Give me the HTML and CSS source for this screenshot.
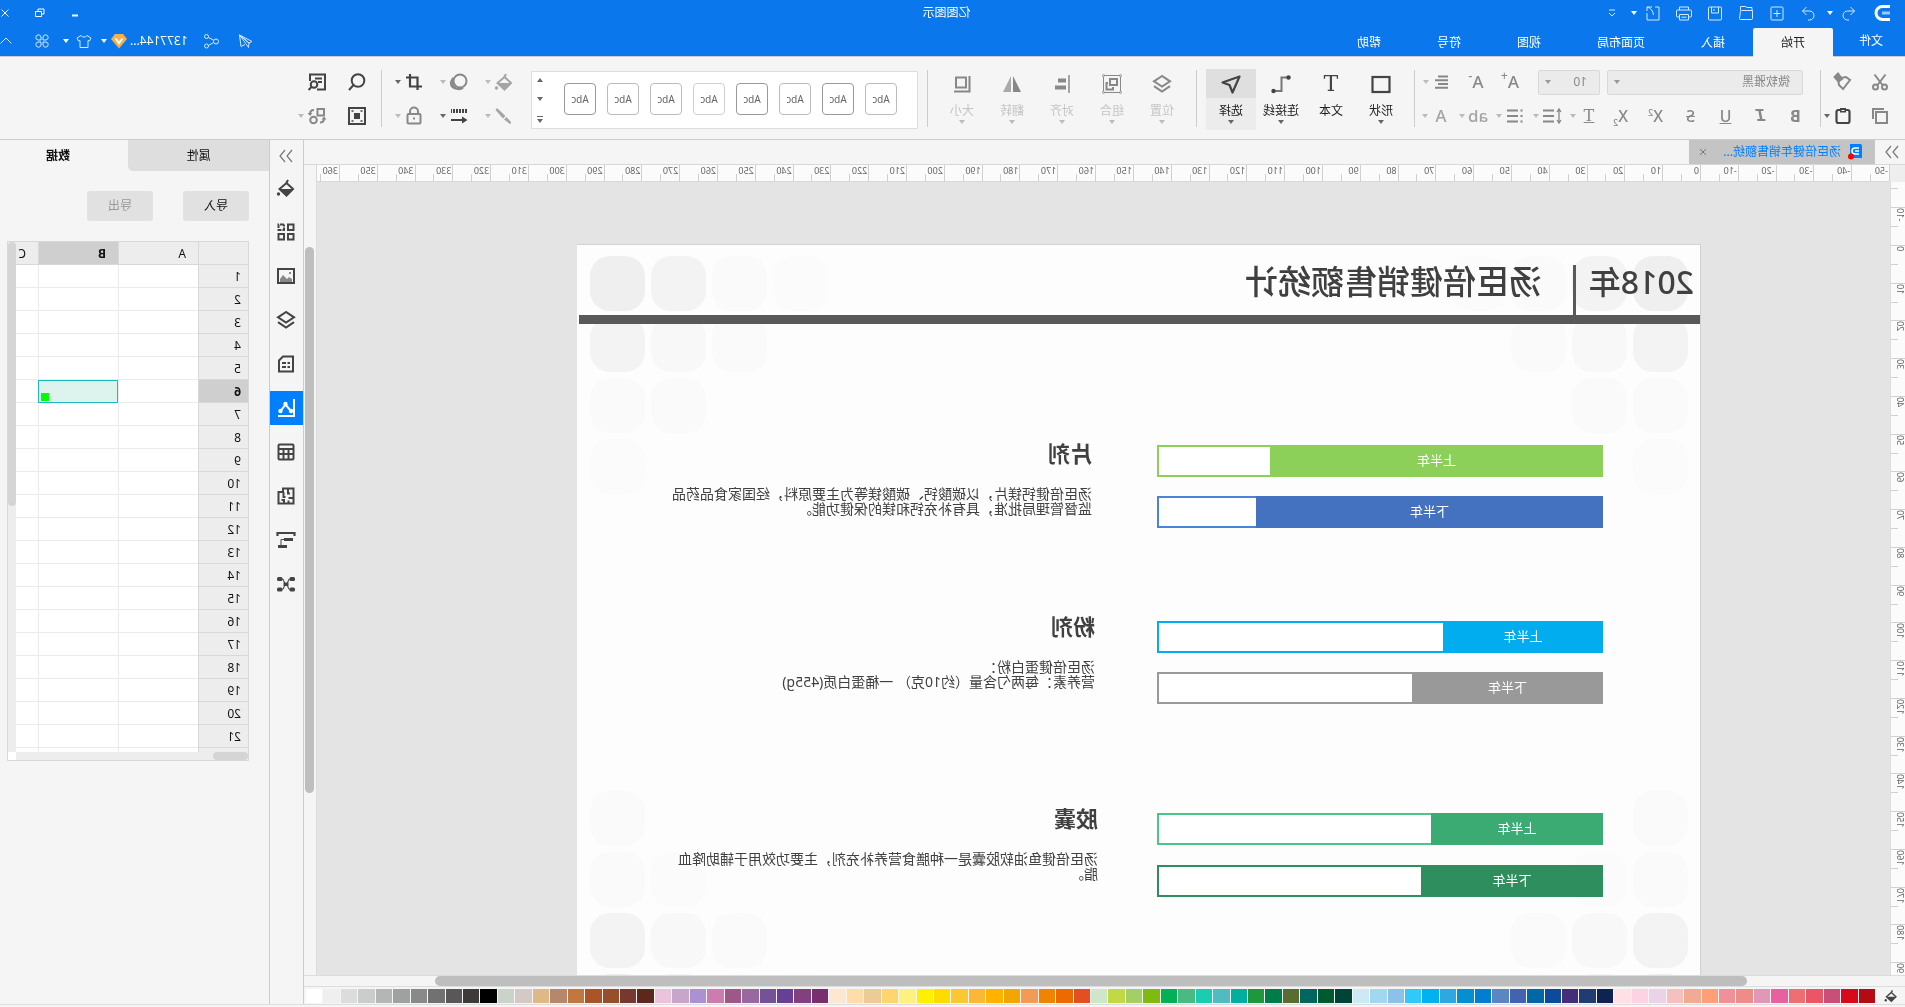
FILE: index.html
```html
<!DOCTYPE html>
<html lang="zh-CN">
<head>
<meta charset="utf-8">
<title>亿图图示</title>
<link rel="stylesheet" href="styles.css">
</head>
<body>
<svg class="sprite" aria-hidden="true">
  <symbol id="undo" viewBox="0 0 20 20"><path d="M8.500 4 4.500 8l4 4M4.500 8h7a4 4 0 0 1 0 9H10"/></symbol>
  <symbol id="redo" viewBox="0 0 20 20"><path d="M11.500 4l4 4-4 4M15.500 8h-7a4 4 0 0 0 0 9H10"/></symbol>
  <symbol id="new" viewBox="0 0 20 20"><rect x="4" y="4" width="12" height="13" rx="1"/><path d="M10 7v7M6.500 10.500h7"/></symbol>
  <symbol id="open" viewBox="0 0 20 20"><path d="M3.500 7.500h11a1 1 0 0 1 1 1l1 7a1 1 0 0 1-1 1h-11a1 1 0 0 1-1-1zM4 7V4.500h5l1.500-1h5v4"/></symbol>
  <symbol id="save" viewBox="0 0 20 20"><rect x="3.500" y="4" width="13" height="13" rx="1"/><path d="M6.500 4v6h7V4M11 6v2"/></symbol>
  <symbol id="print" viewBox="0 0 20 20"><path d="M5.500 7V4h9v3M5 14H3.500a1 1 0 0 1-1-1V8a1 1 0 0 1 1-1h13a1 1 0 0 1 1 1v5a1 1 0 0 1-1 1H15M5.500 11.500h9V17h-9zM7.500 14.200h5"/></symbol>
  <symbol id="export" viewBox="0 0 20 20"><path d="M8 4H4v13h12v-7M11 4h5v4M16 4c-4 1-6 4-6.500 8"/></symbol>
  <symbol id="more" viewBox="0 0 20 20"><path d="M7 7h6M7 10l3 3 3-3"/></symbol>
  <symbol id="send" viewBox="0 0 20 20"><path d="M16.500 4 4 10.500l3 1.500zM16.500 4 7 12l.5 4.500 2-3zM16.500 4 15 15.500l-4-2"/></symbol>
  <symbol id="share" viewBox="0 0 20 20"><circle cx="5" cy="10.500" r="2.500"/><circle cx="14.500" cy="5.500" r="2"/><circle cx="14.500" cy="15" r="2"/><path d="M7.300 9.300l5.400-3M7.300 11.500l5.400 3"/></symbol>
  <symbol id="shirt" viewBox="0 0 20 20"><path d="M7 4.500 3 7l1.500 3 1.500-.5v7h8v-7l1.500.5L17 7l-4-2.500c-1 2-5 2-6 0z"/></symbol>
  <symbol id="apps" viewBox="0 0 20 20"><path d="M9 9H6a2.600 2.600 0 1 1 3-3zM11 9h3a2.600 2.600 0 1 0-3-3zM9 11H6a2.600 2.600 0 1 0 3 3zM11 11h3a2.600 2.600 0 1 1-3 3z"/></symbol>
  <symbol id="up" viewBox="0 0 20 20"><path d="M4.500 12.500 10 7l5.500 5.500"/></symbol>
  <symbol id="cut" viewBox="0 0 20 20"><path d="M4.500 2.500l8 10.500M15.500 2.500l-8 10.500"/><circle cx="5.500" cy="15" r="2.500"/><circle cx="14.500" cy="15" r="2.500"/></symbol>
  <symbol id="painter" viewBox="0 0 20 20"><path d="M13 6 7 5 3 8l7 9 4-4 1-6z"/><path d="M11 7 15 1.500l3.500 3.500-4 4.500z" fill="currentColor"/></symbol>
  <symbol id="copy" viewBox="0 0 20 20"><path d="M6 3h11v10"/><rect x="3" y="6" width="11" height="11"/></symbol>
  <symbol id="paste" viewBox="0 0 20 20"><rect x="3.500" y="4" width="13" height="13" rx="2" stroke-width="2.200"/><path d="M7 2h6v4.500H7z" fill="currentColor" stroke="none"/><path d="M8.500 4.500h3" stroke="#f5f5f5" stroke-width="1"/></symbol>
  <symbol id="align" viewBox="0 0 20 20"><path d="M4 4.500h10M4 8.200h13M4 12h10M4 15.700h13"/></symbol>
  <symbol id="spacing" viewBox="0 0 20 20"><path d="M8 4.500h11M8 10h11M8 15.500h11"/><path d="M3 3v14M1 6l2-3 2 3M1 14l2 3 2-3" stroke-width="1.300"/></symbol>
  <symbol id="list" viewBox="0 0 20 20"><path d="M7 4.500h11M7 10h11M7 15.500h11"/><path d="M2.500 4.500h2M2.500 10h2M2.500 15.500h2"/></symbol>
  <symbol id="shape" viewBox="0 0 20 20"><rect x="1.500" y="3" width="17" height="15" stroke-width="2.200"/></symbol>
  <symbol id="connector" viewBox="0 0 20 20"><path d="M3 3.500h6.500V17H17" stroke="#777"/><circle cx="17.500" cy="17" r="2.200" fill="currentColor" stroke="none"/><circle cx="2.500" cy="3.500" r="2.200" fill="currentColor" stroke="none"/></symbol>
  <symbol id="select" viewBox="0 0 20 20"><path d="M1.500 2.500 18.500 8.500l-7 2.500L8.500 18.500z" stroke-width="2.200" stroke-linejoin="round"/></symbol>
  <symbol id="layers" viewBox="0 0 20 20"><path d="M10 2l8 5.300-8 5.200-8-5.200zM2 12.200l8 5.300 8-5.300"/></symbol>
  <symbol id="group" viewBox="0 0 20 20"><rect x="1.500" y="1.500" width="17" height="17" stroke-width="1"/><g fill="#f5f5f5" stroke-width="1"><circle cx="1.500" cy="1.500" r="1"/><circle cx="18.500" cy="1.500" r="1"/><circle cx="1.500" cy="18.500" r="1"/><circle cx="18.500" cy="18.500" r="1"/></g><rect x="5" y="5" width="7" height="6"/><path d="M14 9h1.500v6.500H9V13"/></symbol>
  <symbol id="objalign" viewBox="0 0 20 20"><path d="M3 1v18" stroke-width="1.500"/><path d="M6 4.500h8v4H6zM6 11.500h11v4H6z" fill="currentColor" stroke="none"/></symbol>
  <symbol id="flip" viewBox="0 0 20 20"><path d="M9 2v16H1z" fill="currentColor" stroke="none"/><path d="M11 2v16h8z" fill="#aaa" stroke="none"/></symbol>
  <symbol id="size" viewBox="0 0 20 20"><rect x="6" y="3.500" width="10" height="10"/><path d="M2.500 2v15.500H18"/></symbol>
  <symbol id="bucket" viewBox="0 0 20 20"><path d="M9.500 5 3 11l6.500 6.500L16.500 11zM10 5.500 8 2"/><path d="M3.500 11h13l-7 7z" fill="currentColor" stroke="none"/><circle cx="17.500" cy="16" r="1.700" fill="currentColor" stroke="none"/></symbol>
  <symbol id="shadow" viewBox="0 0 20 20"><circle cx="9" cy="9" r="6.500"/><path d="M16 6a7.300 7.300 0 0 1-10 10c5 2 13 1 12-6z" fill="currentColor"/></symbol>
  <symbol id="crop" viewBox="0 0 20 20"><path d="M2 5.500h11.500V18M6 2v12.500h12" transform="matrix(-1 0 0 1 20 0)" stroke-width="2.200"/></symbol>
  <symbol id="brush" viewBox="0 0 20 20"><path d="M17 2l1.500 2L11 12.500 8.500 10zM7.500 11l2.500 2.500L4 18q-1.500 0-1-2z" fill="currentColor" stroke="none"/></symbol>
  <symbol id="lines" viewBox="0 0 20 20"><path d="M2 5h16" stroke-width="4" stroke-dasharray="2 1"/><path d="M18 14H4" /><path d="M7 10.500v7L1.500 14z" fill="currentColor" stroke="none"/></symbol>
  <symbol id="lock" viewBox="0 0 20 20"><rect x="3.500" y="8" width="13" height="9.500" rx="1"/><path d="M6 8V5.500a4 4 0 0 1 8 0V8M9 12.500h2"/></symbol>
  <symbol id="find" viewBox="0 0 20 20"><circle cx="9" cy="8.500" r="6.300"/><path d="M13.500 13l4.500 5"/></symbol>
  <symbol id="findlist" viewBox="0 0 20 20"><path d="M10 17.500H2V2.500h15V9M5 6.500h7M5 10h4"/><circle cx="13" cy="12.500" r="3.300"/><path d="M15.500 15l3 3"/></symbol>
  <symbol id="fit" viewBox="0 0 20 20"><rect x="2" y="2" width="16" height="16" stroke-width="2"/><path d="M7 7h6v6H7z" fill="currentColor" stroke="none"/><path d="M4.500 5h2M4.500 15h2M13.500 5h2M13.500 15h2" stroke-width="1.300"/></symbol>
  <symbol id="replace" viewBox="0 0 20 20"><rect x="3" y="3" width="6.500" height="6.500"/><circle cx="13.500" cy="14" r="3.300"/><path d="M13 4c3 0 4 1 4 4M7 16.500c-3 0-4-1-4-4"/><path d="M14.500 7h5l-2.500 3zM.5 13.500h5L3 10.500z" fill="currentColor" stroke="none"/></symbol>
  <symbol id="chev" viewBox="0 0 20 20"><path d="M4 4l5 6-5 6M11 4l5 6-5 6" stroke-width="1.200"/></symbol>
  <symbol id="library" viewBox="0 0 20 20"><rect x="2.500" y="2.500" width="5.500" height="5.500"/><path d="M12 2.500h5.500V8H12V2.500" stroke-dasharray="4 1"/><rect x="2.500" y="12" width="5.500" height="5.500"/><rect x="12" y="12" width="5.500" height="5.500"/></symbol>
  <symbol id="image" viewBox="0 0 20 20"><rect x="2" y="3" width="16" height="14"/><path d="M4 16v-3l3-2 2 2 4-4 3 4v3z" fill="#888" stroke="none"/><path d="M5 7h2" stroke="#888"/></symbol>
  <symbol id="doc" viewBox="0 0 20 20"><path d="M3 2.500h10l4 4v11H3zM6 9h2.500M10 9h4M6 13h2.500M10 13h4"/></symbol>
  <symbol id="chart" viewBox="0 0 20 20"><path d="M2 1v17h16"/><path d="M5.500 12.500l5-6 4.500 6"/><g fill="currentColor" stroke="none"><circle cx="10.500" cy="6" r="2.200"/><circle cx="5" cy="13" r="2.200"/><circle cx="15.500" cy="13" r="2.200"/></g></symbol>
  <symbol id="table" viewBox="0 0 20 20"><rect x="2.500" y="2.500" width="15" height="15" rx="1"/><path d="M2.500 7h15M2.500 12h15M7.500 7v10M12.500 7v10"/></symbol>
  <symbol id="plan" viewBox="0 0 20 20"><path d="M2.500 2.500h10.500v3.500h4.500v11.500h-15zM8 2.500v5H6M2.500 12h5M7.500 17v-2.500M12.500 6v5h-2M12 17.500v-3.500h2.500"/></symbol>
  <symbol id="gantt" viewBox="0 0 20 20"><path d="M1.500 6V3h17v3" stroke-width="2.200"/><path d="M3 8h9v3H3zM9 15h9v3H9z" fill="currentColor" stroke="none"/><path d="M11.500 9.500H15V16" stroke-width="1"/></symbol>
  <symbol id="mind" viewBox="0 0 20 20"><g fill="currentColor" stroke="none"><rect x="1" y="3" width="5.500" height="4" rx="1.500"/><rect x="13.500" y="3" width="5.500" height="4" rx="1.500"/><rect x="1" y="13.500" width="5.500" height="4" rx="1.500"/><rect x="13.500" y="13.500" width="5.500" height="4" rx="1.500"/><rect x="7.500" y="8.500" width="5" height="3.500"/></g><path d="M6 5c3 0 1 5 4 5s1-5 4-5M6 15.500c3 0 1-5 4-5s1 5 4 5" stroke-width="1.200"/></symbol>
</svg>

<div class="app">
  <header class="titlebar">
    <div class="quick">
      <svg class="logo" viewBox="0 0 16 16"><path d="M0 1.500h7.500a6.500 6.500 0 0 1 0 13H0" fill="none" stroke="#fff" stroke-width="3"/><path d="M0 8h8" stroke="#9cc9f8" stroke-width="3"/></svg>
      <button class="tool" aria-label="撤销"><svg><use href="#undo"/></svg></button><i class="caret"></i>
      <button class="tool" aria-label="恢复"><svg><use href="#redo"/></svg></button>
      <button class="tool" aria-label="新建"><svg><use href="#new"/></svg></button>
      <button class="tool" aria-label="打开"><svg><use href="#open"/></svg></button>
      <button class="tool" aria-label="保存"><svg><use href="#save"/></svg></button>
      <button class="tool" aria-label="打印"><svg><use href="#print"/></svg></button>
      <button class="tool" aria-label="导出"><svg><use href="#export"/></svg></button><i class="caret"></i>
      <button class="tool" aria-label="更多"><svg><use href="#more"/></svg></button>
    </div>
    <h1 class="apptitle">亿图图示</h1>
    <div class="winbtns">
      <button aria-label="最小化"><svg viewBox="0 0 10 10"><path d="M2 7.500h6" stroke-width="2"/></svg></button>
      <button aria-label="还原"><svg viewBox="0 0 10 10"><path d="M7 3V1H1v5h2M3.500 3.500h6v5h-6z"/></svg></button>
      <button aria-label="关闭"><svg viewBox="0 0 10 10"><path d="M1.500 1.500l7 7M8.500 1.500l-7 7"/></svg></button>
    </div>
  </header>

  <nav class="menubar">
    <a class="file" href="#file">文件</a>
    <a class="active" href="#home">开始</a>
    <a href="#insert">插入</a>
    <a class="wide" href="#layout">页面布局</a>
    <a href="#view">视图</a>
    <a href="#symbol">符号</a>
    <a href="#help">帮助</a>
    <div class="account">
      <button class="tool" aria-label="发送"><svg><use href="#send"/></svg></button>
      <button class="tool" aria-label="分享"><svg><use href="#share"/></svg></button>
      <button class="user">1377144...<svg viewBox="0 0 16 16"><path d="M4 1h8l4 5-8 9.500L0 6z" fill="#f5b04a"/><path d="M4.500 5.500 8 10l3.500-4.500" fill="none" stroke="#fff" stroke-width="2"/></svg><i class="caret"></i></button>
      <button class="tool" aria-label="皮肤"><svg><use href="#shirt"/></svg></button><i class="caret"></i>
      <button class="tool apps" aria-label="应用"><svg><use href="#apps"/></svg></button>
      <button class="tool" aria-label="收起"><svg><use href="#up"/></svg></button>
    </div>
  </nav>

  <section class="ribbon">
    <div class="group clip">
      <div class="row"><button class="tool mid" aria-label="剪切"><svg><use href="#cut"/></svg></button><button class="tool mid" aria-label="格式刷"><svg><use href="#painter"/></svg></button></div>
      <div class="row"><button class="tool mid" aria-label="复制"><svg><use href="#copy"/></svg></button><button class="tool" aria-label="粘贴"><svg><use href="#paste"/></svg></button><i class="caret"></i></div>
    </div>
    <div class="group font">
      <div class="row">
        <label class="combo family"><select aria-label="字体"><option>微软雅黑</option></select><i class="caret"></i></label>
        <label class="combo points"><select aria-label="字号"><option>10</option></select><i class="caret"></i></label>
        <div class="sizers"><button class="tool mid glyph">A<sup>+</sup></button><button class="tool mid glyph">A<sup>-</sup></button><span class="drop"><button class="tool mid" aria-label="对齐"><svg><use href="#align"/></svg></button><i class="caret dim"></i></span></div>
      </div>
      <div class="row styles">
        <button class="letter bold">B</button><button class="letter ital">I</button><button class="letter under">U</button><button class="letter strike">S</button><button class="letter">X<sup>2</sup></button><button class="letter">X<sub>2</sub></button>
        <div class="drops">
          <span class="drop"><button class="tool mid tcurve">T</button><i class="caret dim"></i></span>
          <span class="drop"><button class="tool mid" aria-label="行距"><svg><use href="#spacing"/></svg></button><i class="caret dim"></i></span>
          <span class="drop"><button class="tool mid" aria-label="列表"><svg><use href="#list"/></svg></button><i class="caret dim"></i></span>
          <span class="drop"><button class="tool dimmed glyph">ab</button><i class="caret dim"></i></span>
          <span class="drop"><button class="tool dimmed glyph">A</button><i class="caret dim"></i></span>
        </div>
      </div>
    </div>
    <div class="group big">
      <button class="bigbtn"><span><svg><use href="#shape"/></svg></span>形状<i class="caret"></i></button>
      <button class="bigbtn"><span class="slab">T</span>文本</button>
      <button class="bigbtn"><span><svg><use href="#connector"/></svg></span>连接线<i class="caret"></i></button>
      <button class="bigbtn active"><span><svg><use href="#select"/></svg></span>选择<i class="caret"></i></button>
    </div>
    <div class="group big off">
      <button class="bigbtn"><span><svg><use href="#layers"/></svg></span>位置<i class="caret"></i></button>
      <button class="bigbtn"><span><svg><use href="#group"/></svg></span>组合<i class="caret"></i></button>
      <button class="bigbtn"><span><svg><use href="#objalign"/></svg></span>对齐<i class="caret"></i></button>
      <button class="bigbtn"><span><svg><use href="#flip"/></svg></span>翻转<i class="caret"></i></button>
      <button class="bigbtn"><span><svg><use href="#size"/></svg></span>大小<i class="caret"></i></button>
    </div>
    <div class="gallery">
      <button class="c2">Abc</button><button class="c1">Abc</button><button class="c2">Abc</button><button class="c1">Abc</button><button class="c3">Abc</button><button class="c2">Abc</button><button class="c2">Abc</button><button class="c1">Abc</button>
      <div class="scroller"><i class="caret flip"></i><i class="caret"></i><i class="caret lined"></i></div>
    </div>
    <div class="group paint">
      <div class="row">
        <span class="drop"><button class="tool dimmed" aria-label="填充"><svg><use href="#bucket"/></svg></button><i class="caret dim"></i></span>
        <span class="drop"><button class="tool mid" aria-label="阴影"><svg><use href="#shadow"/></svg></button><i class="caret dim"></i></span>
        <span class="drop"><button class="tool" aria-label="裁剪"><svg><use href="#crop"/></svg></button><i class="caret"></i></span>
      </div>
      <div class="row">
        <span class="drop"><button class="tool dimmed" aria-label="线条"><svg><use href="#brush"/></svg></button><i class="caret dim"></i></span>
        <span class="drop"><button class="tool" aria-label="线型"><svg><use href="#lines"/></svg></button><i class="caret"></i></span>
        <span class="drop"><button class="tool mid" aria-label="锁定"><svg><use href="#lock"/></svg></button><i class="caret dim"></i></span>
      </div>
    </div>
    <div class="group search">
      <div class="row"><button class="tool" aria-label="查找"><svg><use href="#find"/></svg></button><button class="tool" aria-label="查找形状"><svg><use href="#findlist"/></svg></button></div>
      <div class="row"><button class="tool" aria-label="适应"><svg><use href="#fit"/></svg></button><span class="drop"><button class="tool mid" aria-label="替换"><svg><use href="#replace"/></svg></button><i class="caret dim"></i></span></div>
    </div>
  </section>

  <main class="work">
    <section class="editor">
      <div class="doctabs">
        <button class="expand" aria-label="展开"><svg><use href="#chev"/></svg></button>
        <div class="doctab">
          <svg class="docicon" viewBox="0 0 14 16"><path d="M0 1.500Q0 0 1.500 0H12v13q0 1-1.500 1H0z" fill="#0080ff"/><path d="M3 4h4a3 3 0 0 1 0 6H3M3 7h4" fill="none" stroke="#fff" stroke-width="1.600"/><circle cx="11" cy="12.500" r="3" fill="#f00"/></svg>
          <a href="#doc">汤臣倍健年销售额统...</a>
          <button aria-label="关闭文档"><svg viewBox="0 0 10 10"><path d="M2 2l6 6M8 2l-6 6"/></svg></button>
        </div>
      </div>
      <div class="corner"></div>
      <div class="hruler" id="hruler"></div>
      <div class="vtop"></div>
      <div class="vruler" id="vruler"></div>
      <div class="canvas">
        <article class="page">
          <div class="dots tl"><i class="d1"></i><i class="d2"></i><i class="d4"></i><i class="d5"></i><i class="d2"></i><i class="d3"></i><i class="d4"></i><b></b><i class="d4"></i><i class="d4"></i><b></b><b></b><i class="d5"></i></div>
          <div class="dots tr"><i class="d1"></i><i class="d2"></i><i class="d4"></i><i class="d5"></i><i class="d2"></i><i class="d3"></i><i class="d4"></i><b></b><i class="d4"></i><i class="d4"></i><b></b><b></b><i class="d5"></i></div>
          <div class="dots bl"><i class="d4"></i><b></b><b></b><b></b><i class="d4"></i><i class="d5"></i><b></b><b></b><i class="d2"></i><i class="d3"></i><i class="d4"></i><b></b><i class="d1"></i><i class="d2"></i><i class="d4"></i><i class="d5"></i></div>
          <div class="dots br"><i class="d4"></i><b></b><b></b><b></b><i class="d4"></i><i class="d5"></i><b></b><b></b><i class="d2"></i><i class="d3"></i><i class="d4"></i><b></b><i class="d1"></i><i class="d2"></i><i class="d4"></i><i class="d5"></i></div>
          <header class="heading"><span class="year">2018年</span><h2>汤臣倍健销售额统计</h2></header>

          <section class="product p1">
            <div class="bars">
              <div class="bar lime"><span style="width:333px">上半年</span></div>
              <div class="bar blue"><span style="width:347px">下半年</span></div>
            </div>
            <div class="copy"><h3>片剂</h3><p>汤臣倍健钙镁片，以碳酸钙、碳酸镁等为主要原料，经国家食品药品<br>监督管理局批准，具有补充钙和镁的保健功能。</p></div>
          </section>
          <section class="product p2">
            <div class="bars">
              <div class="bar sky"><span style="width:160px">上半年</span></div>
              <div class="bar gray"><span style="width:191px">下半年</span></div>
            </div>
            <div class="copy"><h3>粉剂</h3><p>汤臣倍健蛋白粉：<br>营养素：每两勺含量（约10克） 一桶蛋白质(455g)</p></div>
          </section>
          <section class="product p3">
            <div class="bars">
              <div class="bar mint"><span style="width:172px">上半年</span></div>
              <div class="bar pine"><span style="width:182px">下半年</span></div>
            </div>
            <div class="copy"><h3>胶囊</h3><p>汤臣倍健鱼油软胶囊是一种膳食营养补充剂，主要功效用于辅助降血<br>脂。</p></div>
          </section>
        </article>
      </div>
      <div class="vscroll"><i></i></div>
      <div class="hscroll"><i></i></div>
      <div class="palette"><svg><use href="#bucket"/></svg><div class="swatches" id="swatches"></div></div>
    </section>

    <nav class="rail">
      <button class="fold" aria-label="折叠"><svg><use href="#chev"/></svg></button>
      <button aria-label="填充"><svg><use href="#bucket"/></svg></button>
      <button aria-label="符号库"><svg><use href="#library"/></svg></button>
      <button aria-label="图片"><svg><use href="#image"/></svg></button>
      <button aria-label="图层"><svg><use href="#layers"/></svg></button>
      <button aria-label="页面"><svg><use href="#doc"/></svg></button>
      <button class="active" aria-label="图表"><svg><use href="#chart"/></svg></button>
      <button aria-label="表格"><svg><use href="#table"/></svg></button>
      <button aria-label="平面图"><svg><use href="#plan"/></svg></button>
      <button aria-label="甘特图"><svg><use href="#gantt"/></svg></button>
      <button aria-label="思维导图"><svg><use href="#mind"/></svg></button>
    </nav>

    <aside class="panel">
      <div class="paneltabs"><button>属性</button><button class="active">数据</button></div>
      <div class="actions"><button>导入</button><button disabled>导出</button></div>
      <div class="sheet">
        <div class="cells">
          <table>
            <thead><tr><th></th><th>A</th><th class="on">B</th><th>C</th></tr></thead>
            <tbody id="rows"></tbody>
          </table>
        </div>
        <div class="sv"><i></i></div>
        <div class="sh"><i></i></div>
      </div>
    </aside>
  </main>
  <footer class="status"></footer>
</div>
<script src="app.js"></script>
</body>
</html>
```
FILE: styles.css
```css
* { box-sizing: border-box; }
body {
  margin: 0;
  overflow: hidden;
  background: #f5f5f5;
  color: #222;
  font: 12px/16px "Noto Sans", "Noto Sans CJK SC", sans-serif;
}
h1, h2, h3, p { margin: 0; font-size: inherit; font-weight: 400; }
button, select {
  margin: 0;
  padding: 0;
  border: 0;
  background: none;
  color: inherit;
  font: inherit;
}
a { color: inherit; text-decoration: none; }
svg {
  flex: none;
  width: 20px;
  height: 20px;
  fill: none;
  stroke: currentColor;
  stroke-width: 2;
}
.sprite { position: absolute; width: 0; height: 0; }

/* The whole interface is shown in a mirrored layout */
.app {
  display: flex;
  flex-direction: column;
  height: 100vh;
  transform: scaleX(-1);
}

.caret { flex: none; display: flex; justify-content: center; width: 8px; }
.caret::after {
  content: "";
  border: 3px solid transparent;
  border-top: 4px solid #666;
  border-bottom: 0;
}
.caret.dim::after { border-top-color: #bbb; }
.tool {
  display: flex;
  align-items: center;
  justify-content: center;
  flex: none;
  width: 24px;
  height: 24px;
  color: #444;
}
.tool.mid { color: #888; }
.tool.dimmed { color: #a5a5a5; }
.drop { display: flex; align-items: center; }

/* Title bar */
.titlebar {
  display: grid;
  grid-template-columns: 1fr auto 1fr;
  align-items: center;
  height: 28px;
  padding-bottom: 3px;
  background: #0a78ec;
  color: #fff;
}
.titlebar svg, .account svg { stroke-width: 1; }
.titlebar .tool, .account .tool { color: #d5e8fc; }
.titlebar .caret::after, .account .caret::after { border-top-color: #fff; }
.quick { display: flex; align-items: center; gap: 7px; padding-left: 15px; }
.quick .caret { margin: 0 -1px 0 -4px; }
.logo { width: 16px; height: 16px; margin-right: 6px; }
.apptitle { padding-left: 12px; line-height: 24px; }
.winbtns { display: flex; justify-content: flex-end; gap: 25px; }
.winbtns svg { width: 10px; height: 10px; display: block; }

/* Menu */
.menubar { display: flex; height: 29px; background: #0a78ec; color: #fff; border-bottom: 1px solid #ccc; }
.menubar > a { width: 80px; line-height: 30px; text-align: center; }
.menubar > .file { width: 72px; padding-right: 4px; line-height: 26px; }
.menubar > .wide { width: 104px; }
.menubar > .active { height: 29px; border-radius: 2px 2px 0 0; background: #f5f5f5; color: #222; }
.account { display: flex; align-items: center; height: 25px; margin-left: auto; }
.account .tool { margin-right: 11px; }
.account .tool + .caret { margin: 0 8px 0 -9px; }
.account .tool:last-child { margin-right: -6px; }
.account .apps { margin-right: 12px; }
.user { display: flex; align-items: center; margin-right: 4px; }
.user svg { width: 16px; height: 16px; margin: 0 3px; stroke: none; }

/* Ribbon */
.ribbon { display: flex; height: 83px; border-bottom: 1px solid #ccc; background: #f5f5f5; }
.group {
  position: relative;
  flex: none;
  padding-top: 8px;
}
.group::after {
  content: "";
  position: absolute;
  top: 13px;
  right: 0;
  width: 1px;
  height: 57px;
  background: #ccc;
}
.row { display: flex; align-items: center; height: 34px; }
.clip { width: 85px; padding-left: 13px; }
.clip .row { gap: 13px; }
.clip .caret { margin-left: -13px; }
.font { width: 406px; padding-left: 7px; }
.combo {
  display: flex;
  align-items: center;
  height: 25px;
  border: 1px solid #d8d8dc;
  border-radius: 2px;
  background: #ebebeb;
  color: #888;
}
.combo select { flex: 1; min-width: 0; padding-left: 12px; appearance: none; }
.combo .caret { margin-right: 5px; }
.combo .caret::after { border-width: 4px 3px 0; border-top-color: #999; }
.family { width: 196px; margin-left: 10px; }
.points { width: 62px; margin-left: 7px; }
.sizers { display: flex; gap: 10px; margin-left: 16px; }
.glyph { font-size: 17px; font-weight: 500; }
.glyph sup { align-self: flex-start; font-size: 12px; line-height: 12px; }
.letter { width: 35px; color: #888; font-size: 16px; font-weight: 500; line-height: 24px; }
.letter sup, .letter sub { font-size: 9px; line-height: 9px; }
.bold { font-weight: 700; }
.ital { font-family: "Liberation Mono", monospace; font-size: 18px; font-style: italic; font-weight: 700; }
.under { text-decoration: underline; }
.strike { text-decoration: line-through; }
.drops { display: flex; gap: 5px; margin-left: 2px; }
.tcurve { font-family: "DejaVu Serif", serif; font-size: 16px; text-decoration: underline; }
.big { display: flex; padding: 12px 10px 0 8px; }
.off { padding-left: 9px; }
.bigbtn {
  display: flex;
  flex-direction: column;
  align-items: center;
  width: 50px;
  height: 61px;
  border-radius: 2px;
  white-space: nowrap;
}
.bigbtn span {
  display: flex;
  align-items: center;
  justify-content: center;
  width: 100%;
  height: 29px;
  margin-bottom: 5px;
  color: #444;
}
.bigbtn .caret { margin-top: 1px; }
.bigbtn.active { background: #ececec; }
.bigbtn.active span { background: #dfdfdf; }
.slab { font-family: "DejaVu Serif", serif; font-size: 22px; }
.off .bigbtn { color: #c4c4c4; }
.off .bigbtn span { color: #888; }
.off .caret::after { border-top-color: #bbb; }
.gallery {
  display: flex;
  align-items: center;
  gap: 11px;
  flex: none;
  width: 387px;
  height: 58px;
  margin: 14px 0 0 9px;
  padding: 0 0 3px 20px;
  border: 1px solid #ddd;
  background: #fff;
}
.gallery button {
  width: 32px;
  height: 32px;
  border: 1px solid #bbb;
  border-radius: 4px;
  color: #666;
  font-size: 10px;
}
.gallery .c1 { border-color: #999; }
.gallery .c3 { border-color: #d0d0d0; }
.scroller { display: flex; flex-direction: column; gap: 15px; margin: 3px 4px 0 auto; }
.scroller .flip { transform: scaleY(-1); }
.scroller .lined { width: 6px; margin-left: 1px; padding-top: 2px; border-top: 1px solid #666; }
.paint { width: 150px; padding-left: 15px; }
.paint .row { gap: 13px; }
.search { padding-left: 12px; }
.search::after { display: none; }
.search .row { gap: 16px; }

/* Workspace */
.work { display: flex; flex: 1; min-height: 0; }
.editor {
  display: grid;
  grid-template: 24px 18px minmax(0, 1fr) 12px 17px / 15px minmax(0, 1fr) 13px;
  flex: 1;
  min-width: 0;
}
.doctabs { grid-column: 1 / -1; display: flex; }
.expand { width: 30px; color: #777; }
.expand svg { display: block; width: 20px; margin-left: 3px; }
.doctab { display: flex; align-items: center; width: 186px; padding: 0 9px 0 13px; background: #c4c4c4; color: #0080ff; }
.docicon { width: 14px; height: 16px; margin-right: 7px; stroke: none; }
.doctab button { margin-left: auto; color: #777; }
.doctab button svg { display: block; width: 10px; height: 10px; stroke-width: 1; }
.corner { border-top: 1px solid #d8d8d8; background: #eee; }
.hruler, .vruler { display: grid; overflow: hidden; background: #fbfbfb; color: #666; font-size: 9px; }
.hruler {
  grid-template-columns: repeat(41, minmax(0, 1fr)) 23px;
  border: solid #d8d8d8;
  border-width: 1px 0;
  line-height: 12px;
}
.hruler span {
  padding-left: 1px;
  border-left: 1px solid #d0d0d0;
  background: linear-gradient(#d0d0d0, #d0d0d0) 18px 100% / 1px 7px no-repeat;
}
.vtop { border: solid #d8d8d8; border-width: 1px 0 0 1px; }
.vruler {
  grid-template-rows: 25px repeat(20, minmax(0, 1fr)) 13px;
  border-right: 1px solid #ddd;
}
.vruler span {
  border-top: 1px solid #d0d0d0;
  background: linear-gradient(#d0d0d0, #d0d0d0) 100% 18px / 7px 1px no-repeat;
}
.vruler span:first-child { border-top: 0; background-position: 100% 6px; }
.vruler b { display: block; width: 10px; font-weight: 400; line-height: 10px; writing-mode: vertical-rl; transform: rotate(180deg); }
.canvas { position: relative; overflow: hidden; padding: 62px 0 0 189px; background: #e4e4e4; }
.vscroll { padding: 65px 1px 0 2px; border-left: 1px solid #ddd; }
.vscroll i, .hscroll i { display: block; border-radius: 5px; background: #bebebe; }
.vscroll i { height: 75%; }
.hscroll { grid-column: 1 / -1; border: solid #ddd; border-width: 1px 0; padding: 0 131px 0 158px; }
.hscroll i { height: 10px; }
.palette { grid-column: 1 / -1; display: flex; align-items: center; padding-right: 2px; color: #444; }
.palette svg { width: 14px; height: 14px; margin: 0 9px 0 7px; }
.swatches { display: grid; grid-template-columns: repeat(90, minmax(0, 1fr)); column-gap: 1px; flex: 1; }
.swatches button { height: 14px; }

/* Drawing page */
.page {
  position: relative;
  width: 1124px;
  height: 794px;
  border: solid #d2d2d2;
  border-width: 1px 0 0 1px;
  background: #fdfdfd;
  color: #404040;
}
.dots { position: absolute; display: grid; grid-template-columns: repeat(4, 55px); gap: 6px; }
.dots i { height: 55px; border-radius: 20px; }
.tl, .tr { top: 11px; }
.bl, .br { top: 546px; }
.tl, .bl { left: 12px; }
.tr, .br { right: 13px; direction: rtl; }
.d1 { background: #efefef; }
.d2 { background: #f3f3f3; }
.d3 { background: #f8f8f8; }
.d4 { background: #fafafa; }
.d5 { background: #fbfbfb; }
.heading {
  position: relative;
  display: flex;
  height: 79px;
  margin-right: 2px;
  padding: 20px 0 0 6px;
  border-bottom: 9px solid #595959;
  font-size: 32px;
  font-weight: 500;
  line-height: 34px;
}
.heading h2 { height: 50px; padding-left: 31px; border-left: 3px solid #595959; font-size: 33px; font-weight: 500; }
.year { width: 118px; }
.product { position: absolute; left: 97px; display: flex; align-items: flex-start; }
.p1 { top: 200px; }
.p2 { top: 376px; }
.p3 { top: 568px; }
.bars { display: grid; gap: 19px; width: 446px; }
.p3 .bars { gap: 20px; }
.bar { display: flex; height: 32px; border: 2px solid; background: #fff; }
.bar span { margin: -2px 0 -2px -2px; background: currentColor; font-size: 13px; line-height: 30px; text-align: center; }
.bar span::first-line { color: #fff; }
.lime { color: #8cd05a; }
.blue { color: #4472c0; border-color: #4a84d6; }
.sky { color: #02adef; }
.gray { color: #999; }
.mint { color: #3bab73; border-color: #4cc58a; }
.pine { color: #2e8e5e; }
.product .copy { margin-top: -3px; padding-left: 65px; font-size: 14px; line-height: 15px; white-space: nowrap; }
.product .copy h3 { margin-bottom: 22px; font-size: 22px; font-weight: 700; line-height: 22px; }
.product.p2 .copy { margin-top: -6px; padding-left: 62px; }
.product.p3 .copy { margin-top: -6px; padding-left: 59px; }

/* Icon rail */
.rail {
  display: flex;
  flex-direction: column;
  gap: 10px;
  flex: none;
  width: 35px;
  border: solid #ccc;
  border-width: 0 1px;
  color: #444;
}
.rail button { display: flex; align-items: center; justify-content: center; height: 34px; }
.rail .fold { height: 31px; margin-bottom: -10px; color: #777; }
.rail .active { background: #0080ff; color: #fff; }

/* Data panel */
.panel { flex: none; width: 269px; }
.paneltabs { display: flex; height: 31px; }
.paneltabs button { width: 141px; padding-top: 1px; border-radius: 0 0 5px 0; background: #dedede; color: #111; }
.paneltabs .active { flex: 1; width: auto; padding: 0 0 0 12px; background: none; font-weight: 700; }
.actions { display: flex; gap: 30px; padding: 20px; }
.actions button { width: 66px; height: 30px; border-radius: 3px; background: #e1e1e1; color: #111; }
.actions button:disabled { color: #999; }
.sheet {
  display: grid;
  grid-template: 510px 8px / minmax(0, 1fr) 8px;
  margin: 0 7px 0 20px;
  border: 1px solid #d8d8d8;
  background: #fff;
}
.cells { overflow: hidden; }
table { border-spacing: 0; table-layout: fixed; width: 290px; }
th, td { position: relative; height: 23px; padding: 2px 0 0; border: solid #ebebeb; border-width: 0 1px 1px 0; text-align: left; }
th { padding-left: 12px; width: 80px; border-color: #d8d8d8; background: #ededed; color: #111; font-weight: 400; }
th:first-child { width: 50px; padding-left: 7px; }
th.on { background: #cfcfcf; font-weight: 700; }
td.on { border: 1px solid #1cbac2; background: #ddf3ee; }
td.on::after { content: ""; position: absolute; right: 2px; bottom: 1px; width: 8px; height: 8px; background: #0f0; }
.sv, .sh { background: #ededed; }
.sv i, .sh i { display: block; height: 8px; border-radius: 4px; background: #d5d5d5; }
.sv i { height: 264px; }
.sh i { width: 35px; }
.status { height: 3px; border-top: 1px solid #ddd; }
```
FILE: app.js
```js
const palette = `b30a14 d9091c c94f78 eb5565 ee6e73 e8609f e397b7 ee8c87 f09098 ff9f78 f1ab95 f6c0bf ead3e8 fdd3e3 ffe0e5
0f2350 213c72 432e78 0c4b9b 0068a7 4163b0 5a86c4 007fd0 048fd0 2fa8e1 00b3f0 31c8fa 8cc2ea a1d8ef cce9f5
004438 005a30 00665e 586d2f 007c48 1f983d 00afa0 51bcc0 1acdb0 49ba80 00b155 7fba10 a3d065 c0d945 cde7c8
e34f20 ed6a00 f08300 f39a55 f2a600 ffb300 fcb834 fac931 ffdc00 ffef00 fdf280 ffd570 eccb97 ffdcaa fce7d0
792e70 834080 673f94 745297 9869a0 9d5888 cd7caf ab91d0 c8a5ca ecc3dc 5c281b 763930 964f2a aa5527 c07840
b6876c deb887 d4c9c4 c9d3ca 000000 3e3a39 595757 727171 898989 9fa0a0 b4b5b5 cbcccc dcdcdc efefef ffffff`.split(/\s+/);

document.getElementById('swatches').innerHTML =
  palette.map(c => `<button aria-label="#${c}" style="background:#${c}"></button>`).join('');

let marks = '';
for (let n = -50; n <= 360; n += 10) marks += `<span>${n}</span>`;
document.getElementById('hruler').innerHTML = marks;

marks = '<span></span>';
for (let n = -10; n <= 190; n += 10) marks += `<span><b>${n}</b></span>`;
document.getElementById('vruler').innerHTML = marks;

let rows = '';
for (let n = 1; n <= 22; n++) {
  const on = n === 6 ? ' class="on"' : '';
  rows += `<tr><th${on}>${n}</th><td></td><td${on}></td><td></td></tr>`;
}
document.getElementById('rows').innerHTML = rows;
```
